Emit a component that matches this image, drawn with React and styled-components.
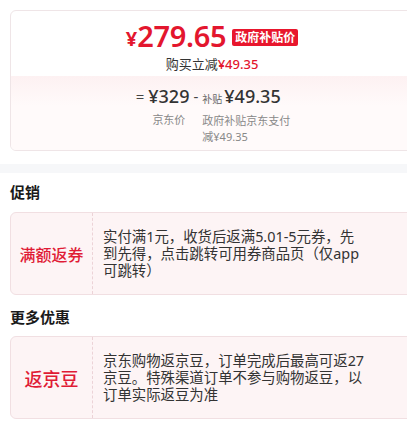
import React from "react";
import styled, { createGlobalStyle } from "styled-components";

const GlobalStyle = createGlobalStyle`
  html, body {
    margin: 0;
    padding: 0;
    background: #ffffff;
    overflow: hidden;
  }
  body {
    font-family: "Noto Sans", "Noto Sans CJK SC", sans-serif;
    color: #1a1a1a;
  }
`;

const Page = styled.div`
  width: 424px;
  padding-top: 10px;
`;

const PriceCard = styled.div`
  margin: 0 10px;
  border: 1px solid #efe5e7;
  border-radius: 6px;
  overflow: hidden;
  background: #ffffff;
`;

const PriceTop = styled.div`
  height: 65px;
  display: flex;
  flex-direction: column;
  align-items: center;
  padding-top: 11px;
  box-sizing: border-box;
`;

const PriceRow = styled.div`
  display: flex;
  align-items: center;
  color: #e3162e;
  height: 28px;
`;

const Yen = styled.span`
  font-size: 20px;
  font-weight: 700;
  margin-top: 4px;
`;

const Amount = styled.span`
  font-size: 29px;
  font-weight: 600;
  letter-spacing: -0.3px;
  line-height: 28px;
`;

const Badge = styled.span`
  margin-left: 6px;
  margin-top: 2px;
  background: #e8162d;
  color: #ffffff;
  font-size: 12px;
  font-weight: 700;
  line-height: 17px;
  padding: 0 3px;
  border-radius: 2px;
`;

const SubLine = styled.div`
  margin-top: 6px;
  font-size: 13px;
  line-height: 16px;
  color: #333333;
`;

const Red = styled.span`
  color: #e3162e;
  font-weight: 500;
`;

const Breakdown = styled.div`
  height: 74px;
  box-sizing: border-box;
  padding-top: 9px;
  background: linear-gradient(#fdf1f2, #fffafa 40%);
  display: flex;
  justify-content: center;
  align-items: flex-start;
  color: #333333;
`;

const Sign = styled.span`
  font-size: 15px;
  line-height: 22px;
  margin: 0 4px;
  color: #444444;
`;

const Col = styled.div`
  display: flex;
  flex-direction: column;
  align-items: ${(p) => (p.center ? "center" : "flex-start")};
`;

const Big = styled.span`
  font-size: 18px;
  font-weight: 500;
  line-height: 22px;
`;

const Tiny = styled.span`
  font-size: 10px;
  color: #666666;
  margin-right: 2px;
`;

const Note = styled.div`
  font-size: 11px;
  line-height: 16px;
  color: #888888;
  margin-top: 5px;
  width: ${(p) => p.width || "auto"};
`;

const Band = styled.div`
  height: 9px;
  margin-top: 13px;
  background: #f6f7f9;
`;

const Heading = styled.div`
  font-size: 15px;
  font-weight: 700;
  line-height: 20px;
  color: #1a1a1a;
  margin: ${(p) => p.margin};
  padding-left: 10px;
`;

const PromoCard = styled.div`
  margin: 0 10px;
  height: 83px;
  box-sizing: border-box;
  display: flex;
  background: #fdf4f5;
  border: 1px solid #f1dfe2;
  border-radius: 6px;
`;

const PromoLabel = styled.div`
  width: 81px;
  flex-shrink: 0;
  display: flex;
  align-items: center;
  justify-content: center;
  border-right: 1px dashed #ecd3d7;
  color: #e01b35;
  font-weight: 500;
  font-size: ${(p) => p.size}px;
`;

const PromoText = styled.div`
  display: flex;
  align-items: center;
  padding-left: 10px;
  width: 262px;
  font-size: 14.4px;
  line-height: 17px;
  color: #333333;
`;

const promos = [
  {
    title: "促销",
    margin: "9px 0 10px",
    label: "满额返券",
    size: 16,
    text: "实付满1元，收货后返满5.01-5元券，先到先得，点击跳转可用券商品页（仅app可跳转）",
  },
  {
    title: "更多优惠",
    margin: "12px 0 9px",
    label: "返京豆",
    size: 18,
    text: "京东购物返京豆，订单完成后最高可返27京豆。特殊渠道订单不参与购物返豆，以订单实际返豆为准",
  },
];

export default function App() {
  return (
    <Page>
      <GlobalStyle />
      <PriceCard>
        <PriceTop>
          <PriceRow>
            <Yen>¥</Yen>
            <Amount>279.65</Amount>
            <Badge>政府补贴价</Badge>
          </PriceRow>
          <SubLine>
            购买立减<Red>¥49.35</Red>
          </SubLine>
        </PriceTop>
        <Breakdown>
          <Sign>=</Sign>
          <Col center>
            <Big>¥329</Big>
            <Note>京东价</Note>
          </Col>
          <Sign>-</Sign>
          <Col>
            <div>
              <Tiny>补贴</Tiny>
              <Big>¥49.35</Big>
            </div>
            <Note width="90px">政府补贴京东支付减¥49.35</Note>
          </Col>
        </Breakdown>
      </PriceCard>
      <Band />
      {promos.map((p) => (
        <div key={p.title}>
          <Heading margin={p.margin}>{p.title}</Heading>
          <PromoCard>
            <PromoLabel size={p.size}>{p.label}</PromoLabel>
            <PromoText>{p.text}</PromoText>
          </PromoCard>
        </div>
      ))}
    </Page>
  );
}
